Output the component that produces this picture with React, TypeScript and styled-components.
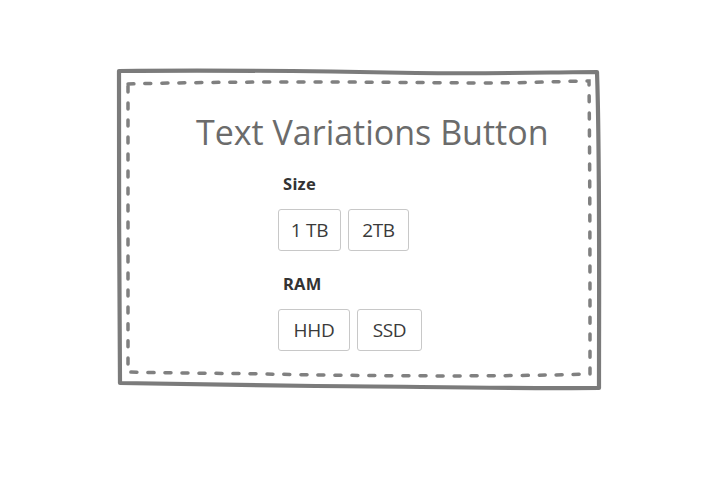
import React from "react";
import styled, { createGlobalStyle } from "styled-components";

const Global = createGlobalStyle`
  html, body { margin: 0; padding: 0; background: #fff; }
  body { font-family: "Open Sans", "Noto Sans", sans-serif; }
`;

const Page = styled.div`
  display: flex;
  padding: 68px 0 0 116px;
`;

const Card = styled.div`
  position: relative;
  width: 486px;
  height: 324px;
  box-sizing: border-box;
  padding: 41px 0 0 80px;
  display: flex;
  flex-direction: column;
`;

const Frame = styled.svg`
  position: absolute;
  left: 0;
  top: 0;
  width: 486px;
  height: 324px;
  pointer-events: none;
`;

const Title = styled.h1`
  margin: 0 0 19px 0;
  font-family: "Open Sans", sans-serif;
  font-weight: 400;
  font-size: 34px;
  line-height: 46px;
  color: #6b6b6b;
  white-space: nowrap;
`;

const Group = styled.div`
  display: flex;
  flex-direction: column;
  margin-left: 82px;
  margin-bottom: 23px;
`;

const Label = styled.div`
  font-family: "Noto Sans", "Open Sans", sans-serif;
  font-weight: 700;
  font-size: 16.5px;
  line-height: 20px;
  letter-spacing: 0.3px;
  color: #333;
  margin: 0 0 15px 5px;
`;

const Row = styled.div`
  display: flex;
  gap: 7px;
`;

const Btn = styled.button<{ $w: number }>`
  width: ${(p) => p.$w}px;
  height: 42px;
  padding: 0;
  background: #fff;
  border: 1px solid #c8c8c8;
  border-radius: 3px;
  font-family: "Open Sans", sans-serif;
  font-weight: 400;
  font-size: 19px;
  color: #3a3a3a;
  letter-spacing: -0.3px;
  cursor: pointer;
`;

export default function App() {
  return (
    <>
      <Global />
      <Page>
        <Card>
          <Frame viewBox="0 0 486 324">
            <path
              d="M3,3 C90,2 200,3 300,5 C390,6 440,4 481,4 C484,90 483,220 483,320 C380,321 280,318 200,318 C130,317 60,316 4,315 C3,220 3,100 3,3 Z"
              fill="none"
              stroke="#7b7b7b"
              strokeWidth="4.2"
              strokeLinejoin="round"
            />
            <path
              d="M12,16 C120,13 250,14 360,15 C420,15 450,13 473,13 C474,110 474,220 474,306 C380,309 250,308 150,306 C90,305 40,305 12,304 C12,200 12,100 12,16 Z"
              fill="none"
              stroke="#808080"
              strokeWidth="3.5"
              strokeDasharray="6 11"
              strokeLinecap="round"
            />
          </Frame>
          <Title>Text Variations Button</Title>
          <Group>
            <Label>Size</Label>
            <Row>
              <Btn $w={63}>1 TB</Btn>
              <Btn $w={61}>2TB</Btn>
            </Row>
          </Group>
          <Group>
            <Label>RAM</Label>
            <Row>
              <Btn $w={72}>HHD</Btn>
              <Btn $w={65}>SSD</Btn>
            </Row>
          </Group>
        </Card>
      </Page>
    </>
  );
}
